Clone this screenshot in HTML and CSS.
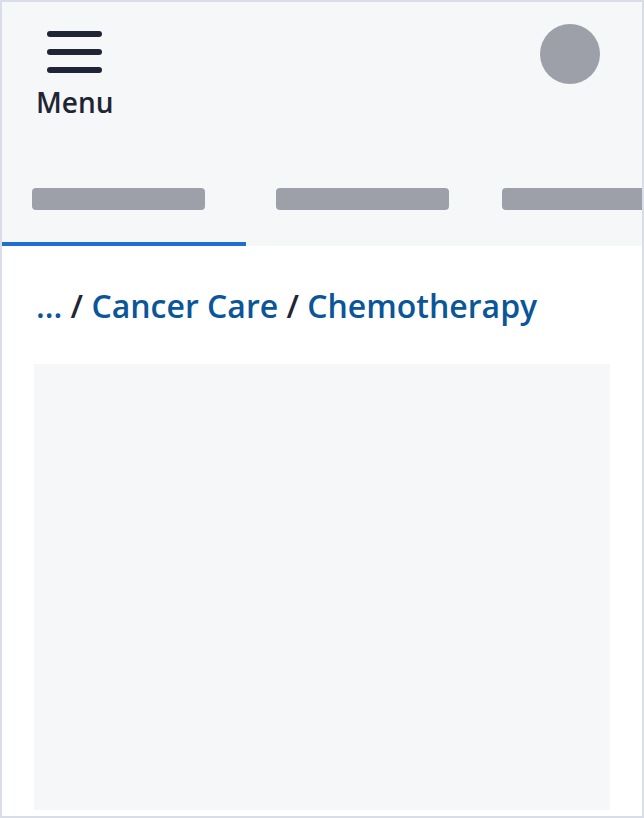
FILE: index.html
```html
<!DOCTYPE html>
<html lang="en">
<head>
<meta charset="utf-8">
<meta name="viewport" content="width=device-width, initial-scale=1">
<title>Chemotherapy</title>
<link rel="stylesheet" href="styles.css">
</head>
<body>
<div class="screen">
  <header class="header">
    <div class="topbar">
      <button class="menu" type="button">
        <svg class="menu-icon" viewBox="0 0 56 42" aria-hidden="true">
          <rect x="0" y="0" width="55" height="6" rx="3"/>
          <rect x="0" y="18" width="55" height="6" rx="3"/>
          <rect x="0" y="36" width="55" height="6" rx="3"/>
        </svg>
        <span>Menu</span>
      </button>
      <button class="avatar" type="button" aria-label="Account"></button>
    </div>
    <nav class="tabs" aria-label="Sections">
      <a class="tab tab-active" href="#" aria-label="First section"><span class="bar"></span></a>
      <a class="tab" href="#" aria-label="Second section"><span class="bar"></span></a>
      <a class="tab" href="#" aria-label="Third section"><span class="bar"></span></a>
    </nav>
  </header>
  <main class="main">
    <nav class="breadcrumb" aria-label="Breadcrumb">
      <a href="#">...</a> / <a href="#">Cancer Care</a> / <a href="#">Chemotherapy</a>
    </nav>
    <div class="panel"></div>
  </main>
</div>
</body>
</html>
```

FILE: styles.css
```css
* {
  box-sizing: border-box;
}

body {
  margin: 0;
  color: #1f2535;
  background: #ffffff;
  font-family: "Open Sans", "Noto Sans", sans-serif;
}

.screen {
  display: flex;
  flex-direction: column;
  min-height: 100vh;
  border: 2px solid #d9dde8;
}

.header {
  background: #f5f7f9;
}

.topbar {
  display: flex;
  justify-content: space-between;
  align-items: flex-start;
  padding: 22px 42px 0 34px;
}

.menu {
  display: flex;
  flex-direction: column;
  align-items: center;
  gap: 8px;
  padding: 7px 0 0;
  border: 0;
  background: none;
  color: inherit;
  font-family: inherit;
  font-size: 28px;
  font-weight: 600;
  line-height: 42px;
}

.menu-icon {
  width: 56px;
  height: 42px;
  fill: #1f2535;
}

.avatar {
  width: 60px;
  height: 60px;
  padding: 0;
  border: 0;
  border-radius: 50%;
  background: #9da0a8;
}

.tabs {
  display: flex;
  margin-top: 33px;
  overflow: hidden;
}

.tab {
  flex: none;
  padding: 32px 23px 32px 30px;
  border-bottom: 4px solid transparent;
}

.tab-active {
  padding-right: 41px;
  border-bottom-color: #1d70d0;
}

.bar {
  display: block;
  width: 173px;
  height: 22px;
  border-radius: 4px;
  background: #9da0a8;
}

.main {
  display: flex;
  flex: 1;
  flex-direction: column;
  padding: 36px 32px 6px;
}

.breadcrumb {
  padding-left: 2px;
  margin-bottom: 34px;
  font-size: 32px;
  font-weight: 600;
  line-height: 48px;
}

.breadcrumb a {
  color: #0b5599;
  text-decoration: none;
}

.panel {
  flex: 1;
  background: #f5f7f9;
}
```
